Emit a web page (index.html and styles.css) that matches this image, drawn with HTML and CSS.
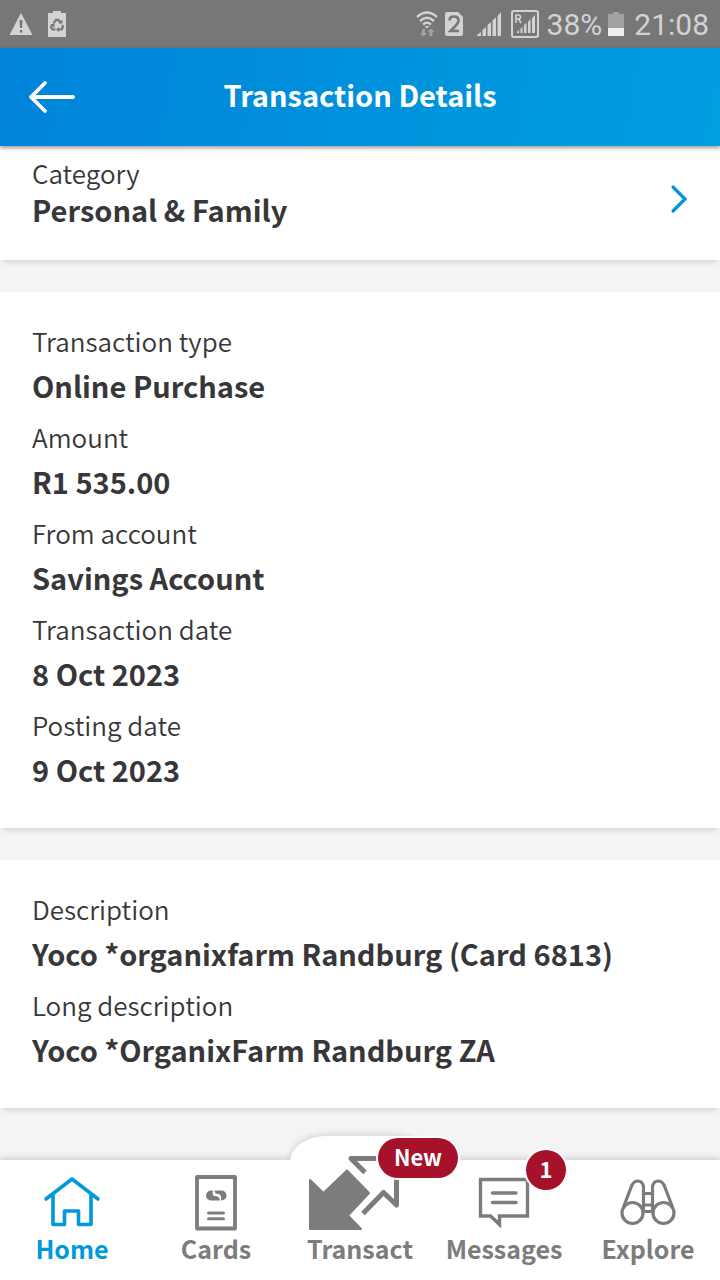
FILE: index.html
```
<!DOCTYPE html>
<html lang="en">
<head>
  <meta charset="UTF-8">
  <meta name="viewport" content="width=device-width, initial-scale=1.0">
  <title>Transaction Details</title>
  <link rel="stylesheet" href="styles.css">
</head>
<body>
  <div class="status-bar">
    <div class="status-group">
      <svg width="24" height="32" viewBox="0 0 24 32">
        <path d="M12 5 23.500 27H.5Z" fill="#d3d3d3"/>
        <path d="M10.500 12h3l-.5 8h-2zM10.800 22h2.500v2.500h-2.500z" fill="#777"/>
      </svg>
      <svg class="recycle" width="18" height="32" viewBox="0 0 18 32">
        <path d="M0 5h5V3h8v2h5v24H0z" fill="#d3d3d3"/>
        <g fill="none" stroke="#777" stroke-width="2.200">
          <path d="M5.500 15.500 8 11.800h2.500l2 3"/>
          <path d="M14 17l1 2-1.500 2.500H10"/>
          <path d="M7.500 21.500H4.500L3 19l1.500-2.500"/>
        </g>
        <path d="M10.500 15.500h4v-4zM11 19v5l-3-2.500zM2.500 16h4v4z" fill="#777"/>
      </svg>
    </div>
    <div class="status-group">
      <svg width="22" height="32" viewBox="0 0 22 32">
        <g fill="none" stroke="#d3d3d3" stroke-width="2.400">
          <path d="M1 9Q11 0 21 9"/>
          <path d="M4 13Q11 6.500 18 13"/>
          <path d="M7 16.500Q11 13 15 16.500"/>
        </g>
        <path d="M8.500 18h5L11 20.500z" fill="#d3d3d3"/>
        <path d="M6 21h3v4h2l-3.500 3.500L4 25h2zM13.500 28v-4h-2l3.500-3.500 3.500 3.500h-2v4z" fill="#a2a2a2"/>
      </svg>
      <svg width="20" height="32" viewBox="0 0 20 32">
        <path d="M3 4h11l5 5v16.500q0 2.500-2.500 2.500h-13Q1 28 1 25.500V6q0-2 2-2z" fill="#d3d3d3"/>
        <path d="M5.500 12.500Q5.500 8.500 10 8.500t4.500 4Q14.500 15 11 18.500L6.500 23h8.500" fill="none" stroke="#777" stroke-width="2.600"/>
      </svg>
      <svg class="signal" width="26" height="32" viewBox="0 0 26 32">
        <path d="M1 28v-1l4-3v4zM6.500 28v-6l3.500-3v9zM11.500 28V17l3.500-3v14zM16.500 28V12.500l3.500-3.200V28zM21.500 28V8L25 4v24z" fill="#d3d3d3"/>
      </svg>
      <svg class="roaming" width="28" height="32" viewBox="0 0 28 32">
        <rect x="1" y="3" width="26" height="26" rx="2" fill="none" stroke="#d3d3d3" stroke-width="2"/>
        <path d="M5 15V7h2.500q2 0 2 2t-2 2H5M7.500 11l2.500 4" fill="none" stroke="#d3d3d3" stroke-width="1.600"/>
        <path d="M6 25v-1l2-2v3zM9.500 25v-4l2-2v6zM13 25v-8l2.500-2v10zM17 25V14l2.500-3v14zM21 25V10l3-3v18z" fill="#d3d3d3"/>
      </svg>
      <span>38%</span>
      <svg width="16" height="32" viewBox="0 0 16 32">
        <path d="M0 6h5V4h6v2h5v14H0z" fill="#a2a2a2"/>
        <path d="M0 20h16v8H0z" fill="#efefef"/>
      </svg>
      <span class="clock">21:08</span>
    </div>
  </div>

  <header class="header">
    <button class="back" type="button" aria-label="Back">
      <svg width="48" height="34" viewBox="0 0 48 34">
        <path d="M45 17H3M17 3 3 17l14 14" fill="none" stroke="#fff" stroke-width="3.800" stroke-linecap="round" stroke-linejoin="round"/>
      </svg>
    </button>
    <h1>Transaction Details</h1>
  </header>

  <main class="content">
    <button class="card category" type="button">
      <span>
        <span class="category-label">Category</span>
        <span class="category-value">Personal &amp; Family</span>
      </span>
      <svg class="chevron" width="18" height="30" viewBox="0 0 18 30">
        <path d="M3 3l12 12L3 27" fill="none" stroke="#0095d6" stroke-width="3.200" stroke-linecap="round"/>
      </svg>
    </button>

    <dl class="card details">
      <div><dt>Transaction type</dt><dd>Online Purchase</dd></div>
      <div><dt>Amount</dt><dd>R1 535.00</dd></div>
      <div><dt>From account</dt><dd>Savings Account</dd></div>
      <div><dt>Transaction date</dt><dd>8 Oct 2023</dd></div>
      <div><dt>Posting date</dt><dd>9 Oct 2023</dd></div>
    </dl>

    <dl class="card details">
      <div><dt>Description</dt><dd>Yoco *organixfarm Randburg (Card 6813)</dd></div>
      <div><dt>Long description</dt><dd>Yoco *OrganixFarm Randburg ZA</dd></div>
    </dl>
  </main>

  <nav class="tabs">
    <a class="tab active" href="#">
      <svg width="60" height="60" viewBox="0 0 60 60">
        <path d="M4 27 30 7l26 20M11 23v29.500h11.500V39h14v13.500H49V23" fill="none" stroke="currentColor" stroke-width="3.600" stroke-linecap="round" stroke-linejoin="round"/>
      </svg>
      <span>Home</span>
    </a>
    <a class="tab" href="#">
      <svg width="60" height="60" viewBox="0 0 60 60">
        <rect x="11" y="5" width="38" height="51.500" fill="none" stroke="currentColor" stroke-width="3.800" stroke-linejoin="round"/>
        <path d="M22.500 41h15M22.500 46.700h15" stroke="currentColor" stroke-width="3" stroke-linecap="round"/>
        <path d="M27 18.500h-2a5 5 0 0 0 0 10H34q0-3.500-4-4.500h-2q-2-1-1-5.500zM28.500 18.500h7a5 5 0 0 1 0 10H35q1-5-2-6.500h-1.500q-3-.5-3-3.500z" fill="currentColor"/>
      </svg>
      <span>Cards</span>
    </a>
    <a class="tab transact" href="#">
      <svg width="108" height="80" viewBox="0 0 108 80">
        <path d="M4 28 17.500 41 41 18.500 63 41 42 63.500 55 77H4z" fill="currentColor" stroke="currentColor" stroke-width="2" stroke-linejoin="round"/>
        <path d="M74 6.500H45l14 14M57 61.500 77.500 40.500 90.500 53V24" fill="none" stroke="currentColor" stroke-width="5" stroke-linejoin="round"/>
      </svg>
      <span>Transact</span>
      <span class="badge badge-new">New</span>
    </a>
    <a class="tab" href="#">
      <svg width="60" height="60" viewBox="0 0 60 60">
        <path d="M6.500 7.500h47V44H25.500v8.500L16.500 44h-10z" fill="none" stroke="currentColor" stroke-width="3.400"/>
        <path d="M18.500 21h23.500M18.500 30.500h23.500" stroke="currentColor" stroke-width="3.400" stroke-linecap="round"/>
      </svg>
      <span>Messages</span>
      <span class="badge badge-count">1</span>
    </a>
    <a class="tab" href="#">
      <svg width="60" height="60" viewBox="0 0 60 60">
        <g fill="none" stroke="currentColor" stroke-width="3.200">
          <circle cx="14.500" cy="41" r="10.500"/>
          <circle cx="45.500" cy="41" r="10.500"/>
          <path d="M5.500 35 14 13q2-4 6-4t5.500 5v25M54.500 35 46 13q-2-4-6-4t-5.500 5v25M25.500 21.500h9M25.500 33h9M25.500 39.500h9"/>
        </g>
      </svg>
      <span>Explore</span>
    </a>
  </nav>
</body>
</html>
```
FILE: styles.css
```
* {
  box-sizing: border-box;
}
body {
  margin: 0;
  min-height: 100vh;
  display: flex;
  flex-direction: column;
  font-family: "Noto Sans CJK SC", "Noto Sans", sans-serif;
  background: #f4f4f4;
  color: #373739;
}
button {
  border: none;
  background: none;
  padding: 0;
  font: inherit;
  color: inherit;
  text-align: left;
  cursor: pointer;
}
svg {
  display: block;
}

/* Status bar */
.status-bar {
  display: flex;
  justify-content: space-between;
  height: 48px;
  padding: 0 11px 0 9px;
  background: #777;
  color: #d3d3d3;
  font-family: Roboto, sans-serif;
  font-size: 30px;
  line-height: 48px;
}
.status-group {
  display: flex;
  align-items: center;
  gap: 6px;
}
.status-group span {
  padding-top: 2px;
}
.recycle {
  margin-left: 9px;
}
.signal {
  margin: 0 3px 0 6px;
}
.roaming {
  margin-right: 2px;
}
.clock {
  margin-left: 4px;
}

/* Header */
.header {
  position: relative;
  z-index: 1;
  display: grid;
  grid-template-columns: 76px 1fr 76px;
  align-items: center;
  height: 98px;
  background: linear-gradient(100deg, #0083d9, #009fe0);
  box-shadow: 0 2px 4px rgba(0, 0, 0, 0.4);
  color: #fff;
}
.back {
  padding-left: 28px;
}
h1 {
  margin: 0;
  padding-bottom: 6px;
  font-size: 29px;
  font-weight: 700;
  text-align: center;
}

/* Cards */
.content {
  display: flex;
  flex-direction: column;
  gap: 32px;
  padding-bottom: 52px;
}
.card {
  margin: 0;
  padding: 27px 32px 37px;
  background: #fff;
  box-shadow: 0 5px 6px -3px rgba(0, 0, 0, 0.15);
}
.category {
  display: flex;
  justify-content: space-between;
  align-items: center;
  padding: 9px 32px 33px;
}
.category-label,
.category-value {
  display: block;
  line-height: 36px;
}
.chevron {
  margin-top: 16px;
}
.details {
  display: flex;
  flex-direction: column;
  gap: 8px;
}
dt,
dd {
  margin: 0;
  line-height: 44px;
}
dt,
.category-label {
  font-size: 26px;
  font-weight: 350;
}
dd,
.category-value {
  font-size: 29px;
  font-weight: 700;
}

/* Bottom tabs */
.tabs {
  position: relative;
  display: grid;
  grid-template-columns: repeat(5, 1fr);
  height: 120px;
  margin-top: auto;
  background: #fff;
  box-shadow: 0 -2px 6px rgba(0, 0, 0, 0.15);
}
.tab {
  position: relative;
  display: flex;
  flex-direction: column;
  justify-content: flex-end;
  align-items: center;
  padding-bottom: 16px;
  color: #7c7c7c;
  font-size: 25px;
  font-weight: 700;
  line-height: 32px;
  text-decoration: none;
}
.tab.active {
  color: #0099da;
}
.tab svg {
  position: relative;
}
.transact svg {
  margin-top: -8px;
}
.transact::before {
  content: "";
  position: absolute;
  top: -24px;
  left: 2px;
  right: 2px;
  height: 26px;
  background: #fff;
  border-radius: 36px 36px 0 0 / 26px 26px 0 0;
  box-shadow: 0 -2px 6px rgba(0, 0, 0, 0.12);
  clip-path: inset(-12px -12px 2px -12px);
}
.badge {
  position: absolute;
  z-index: 1;
  height: 40px;
  border-radius: 20px;
  background: #a5122a;
  box-shadow: 0 0 0 2px #fff;
  color: #fff;
  font-size: 22px;
  line-height: 36px;
  text-align: center;
}
.badge-new {
  top: -22px;
  left: 90px;
  width: 80px;
}
.badge-count {
  top: -10px;
  left: 94px;
  width: 40px;
}
```
